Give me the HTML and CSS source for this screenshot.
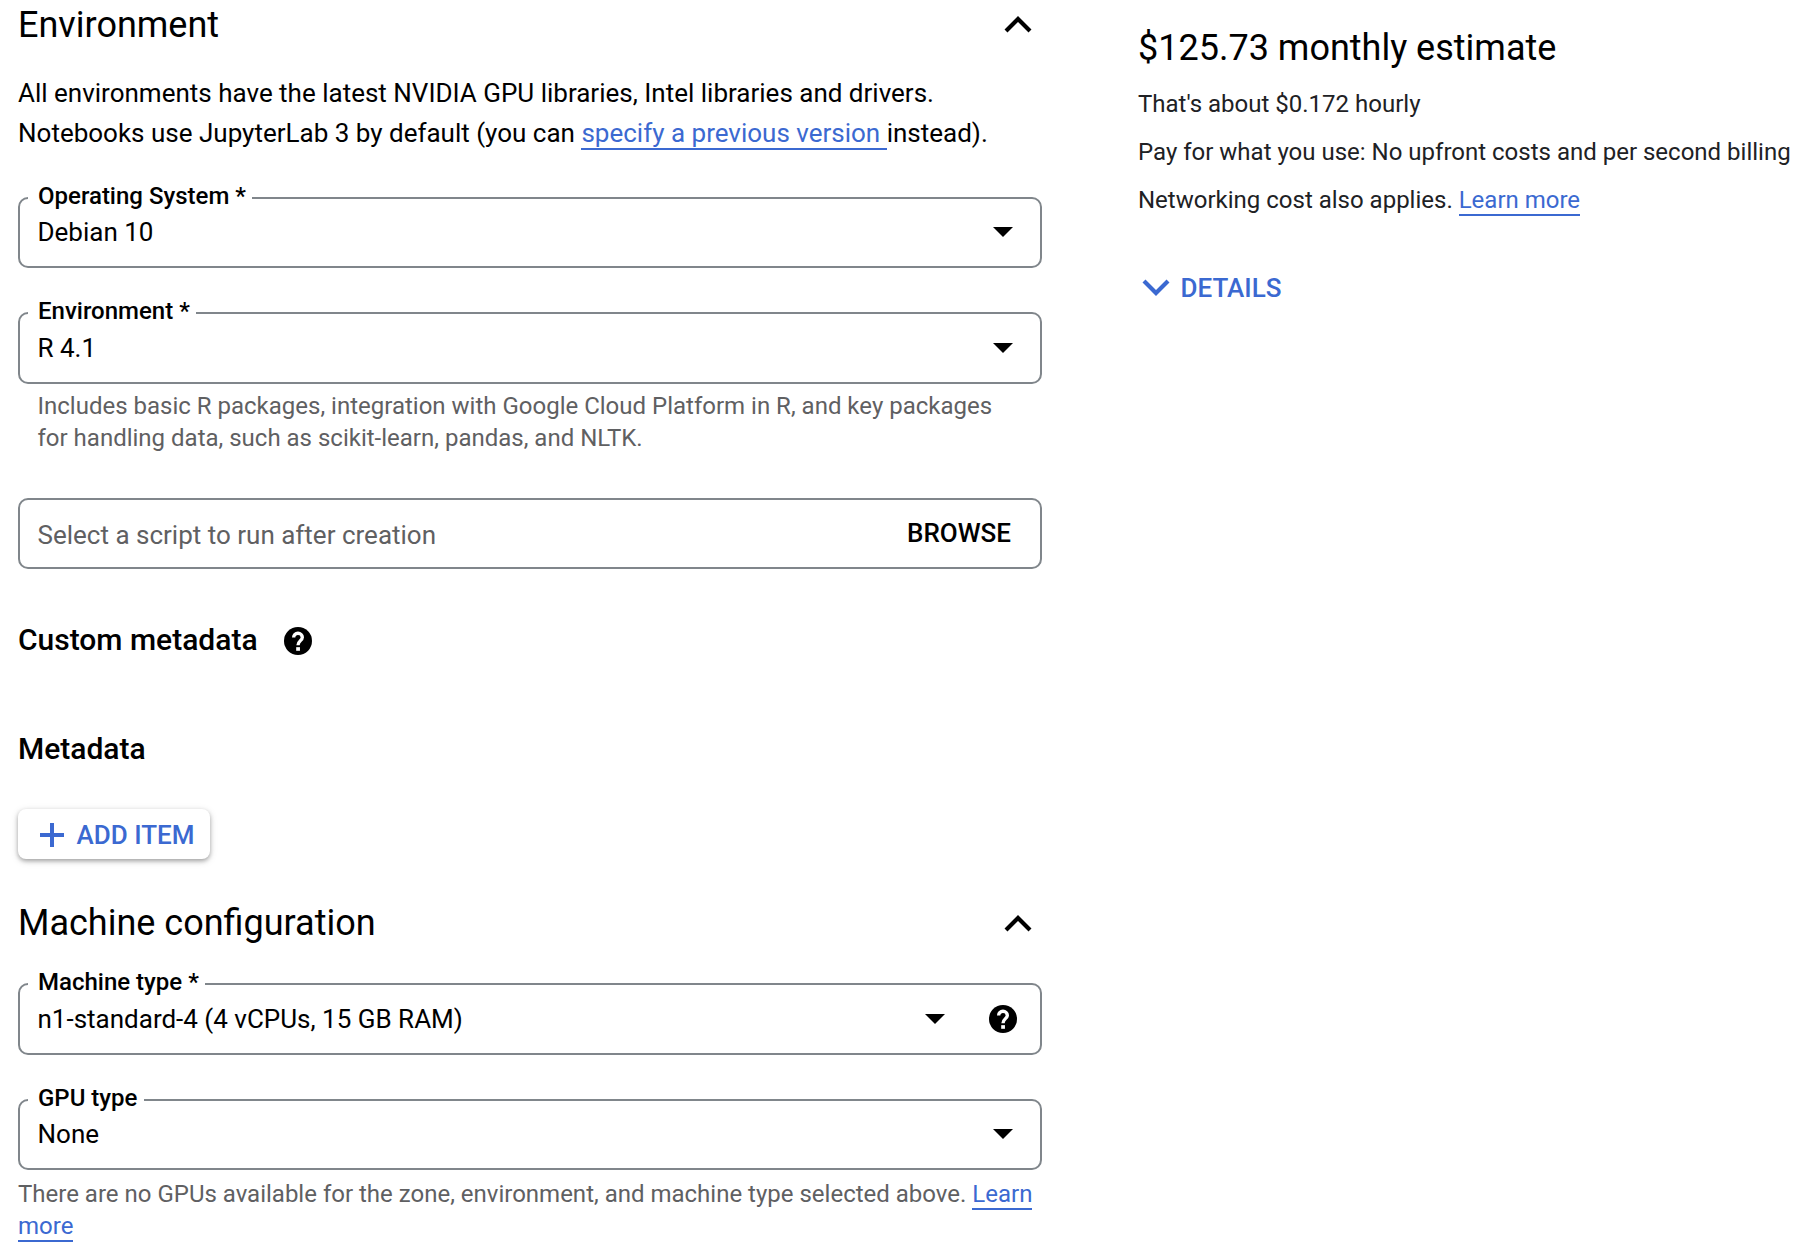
FILE: index.html
```
<!DOCTYPE html>
<html lang="en">
<head>
<meta charset="utf-8">
<title>Create a notebook</title>
<link rel="stylesheet" href="styles.css">
</head>
<body>
<svg width="0" height="0" class="sprite" aria-hidden="true">
  <symbol id="chevron-up" viewBox="0 0 28 17"><path d="M2 15L14 3l12 12" fill="none" stroke="currentColor" stroke-width="4.2"/></symbol>
  <symbol id="chevron-down" viewBox="0 0 28 17"><path d="M2 2l12 12L26 2" fill="none" stroke="currentColor" stroke-width="4.2"/></symbol>
  <symbol id="arrow" viewBox="0 0 20 10"><path d="M0 0h20L10 10z" fill="currentColor"/></symbol>
  <symbol id="plus" viewBox="0 0 24 24"><path d="M10 0h4v10h10v4H14v10h-4V14H0v-4h10z" fill="currentColor"/></symbol>
  <symbol id="help" viewBox="2 2 20 20"><circle cx="12" cy="12" r="10" fill="currentColor"/><path d="M8.9 9.5A3.1 2.95 0 0 1 15.1 9.4C15.1 11.7 12 11.9 12 15" fill="none" stroke="#fff" stroke-width="2.4"/><path d="M10.7 16.4h2.7v2.6h-2.7z" fill="#fff"/></symbol>
</svg>
<div class="page">
  <main class="form">
    <header class="section-head">
      <h2 class="section-title">Environment</h2>
      <svg class="chevron chevron-raised"><use href="#chevron-up"/></svg>
    </header>
    <p class="intro">All environments have the latest NVIDIA GPU libraries, Intel libraries and drivers.<br>Notebooks use JupyterLab 3 by default (you can <a class="link" href="#">specify a previous version </a>instead).</p>
    <fieldset class="field">
      <legend class="label">Operating System *</legend>
      <div class="control"><span class="value">Debian 10</span><svg class="arrow"><use href="#arrow"/></svg></div>
    </fieldset>
    <fieldset class="field field-tall">
      <legend class="label">Environment *</legend>
      <div class="control"><span class="value">R 4.1</span><svg class="arrow"><use href="#arrow"/></svg></div>
    </fieldset>
    <p class="hint hint-inset">Includes basic R packages, integration with Google Cloud Platform in R, and key packages for handling data, such as scikit-learn, pandas, and NLTK.</p>
    <div class="script">
      <span class="placeholder">Select a script to run after creation</span>
      <span class="browse">BROWSE</span>
    </div>
    <div class="subhead">
      <h3 class="subtitle">Custom metadata</h3>
      <svg class="help"><use href="#help"/></svg>
    </div>
    <h3 class="subtitle metadata">Metadata</h3>
    <button class="add"><svg class="plus"><use href="#plus"/></svg><span class="add-text">ADD ITEM</span></button>
    <header class="section-head machine-head">
      <h2 class="section-title">Machine configuration</h2>
      <svg class="chevron"><use href="#chevron-up"/></svg>
    </header>
    <fieldset class="field field-tall field-first">
      <legend class="label">Machine type *</legend>
      <div class="control with-help"><span class="value">n1-standard-4 (4 vCPUs, 15 GB RAM)</span><svg class="arrow"><use href="#arrow"/></svg><svg class="help"><use href="#help"/></svg></div>
    </fieldset>
    <fieldset class="field">
      <legend class="label">GPU type</legend>
      <div class="control"><span class="value">None</span><svg class="arrow"><use href="#arrow"/></svg></div>
    </fieldset>
    <p class="hint hint-gpu">There are no GPUs available for the zone, environment, and machine type selected above. <a class="link" href="#">Learn more</a></p>
  </main>
  <aside class="estimate">
    <h2 class="price">$125.73 monthly estimate</h2>
    <p class="note">That's about $0.172 hourly</p>
    <p class="note">Pay for what you use: No upfront costs and per second billing</p>
    <p class="note">Networking cost also applies. <a class="link" href="#">Learn more</a></p>
    <div class="details"><svg class="chevron chevron-raised"><use href="#chevron-down"/></svg><span class="details-text">DETAILS</span></div>
  </aside>
</div>
</body>
</html>
```
FILE: styles.css
```
* { box-sizing: border-box; }
body { margin: 0; background: #fff; color: #000; font-family: Roboto, "Liberation Sans", sans-serif; font-size: 26px; }
h2, h3, p { margin: 0; }
svg { display: block; flex: none; }
.sprite { position: absolute; }
.page { display: flex; gap: 96px; height: 1260px; padding: 3px 0 0 18px; overflow: hidden; }
.form { width: 1024px; flex: none; }
.section-head { display: flex; justify-content: space-between; align-items: center; height: 44px; padding-right: 10px; }
.section-title { font-size: 36px; line-height: 44px; font-weight: 400; }
.chevron { width: 28px; height: 17px; }
.chevron-raised { margin-bottom: 1px; }
.intro { margin-top: 26px; line-height: 40px; white-space: nowrap; }
.link { color: #3b69d1; text-decoration: none; border-bottom: 2px solid #3b69d1; }
.field { margin: 31px 0 0; padding: 0 0 0 8px; min-width: 0; height: 84px; border: 2px solid #80868b; border-radius: 10px; }
.label { padding: 0 6.5px 4px 10px; font-size: 24px; line-height: 24px; font-weight: 500; }
.control { display: flex; align-items: center; height: 30px; margin-top: 5px; padding: 0 27px 0 9.5px; }
.with-help { padding-right: 23px; gap: 44px; }
.value { flex: 1; line-height: 30px; }
.arrow { width: 20px; height: 10px; }
.help { width: 28px; height: 28px; }
.field-tall { height: 85px; }
.field-tall .control { margin-top: 6px; }
.hint { margin-top: 6px; font-size: 24px; line-height: 32px; color: #5f6062; }
.hint-inset { padding: 0 19.5px; }
.hint-gpu { margin-top: 8px; }
.script { display: flex; justify-content: space-between; height: 71px; margin-top: 44px; padding: 18px 29px 0 17.5px; border: 2px solid #80868b; border-radius: 10px; }
.placeholder { line-height: 34px; color: #5f6062; }
.browse { line-height: 30px; font-weight: 500; }
.subhead { display: flex; align-items: center; gap: 26px; height: 34px; margin-top: 54px; }
.subhead .help { margin-top: 2px; }
.subtitle { font-size: 30px; line-height: 34px; font-weight: 500; }
.metadata { margin-top: 75px; }
.add { display: flex; align-items: center; gap: 12.5px; width: 192px; height: 50px; margin-top: 43px; padding: 2px 0 0 22px; border: 0; border-radius: 8px; background: #fff; color: #3b69d1; font: 500 26px/30px Roboto, sans-serif; box-shadow: 0 2px 4px rgba(0,0,0,.3), 0 2px 8px rgba(0,0,0,.12); }
.plus { width: 24px; height: 24px; }
.machine-head { margin-top: 42px; }
.field-first { margin-top: 25px; }
.estimate { flex: none; width: 664px; }
.price { margin-top: 23px; font-size: 36px; line-height: 44px; font-weight: 400; }
.note { font-size: 24px; line-height: 32px; margin-top: 16px; color: #202124; white-space: nowrap; }
.price + .note { margin-top: 18px; }
.details { display: flex; align-items: center; gap: 10.5px; height: 30px; margin-top: 57px; padding-left: 4px; color: #3b69d1; font-weight: 500; }
```
